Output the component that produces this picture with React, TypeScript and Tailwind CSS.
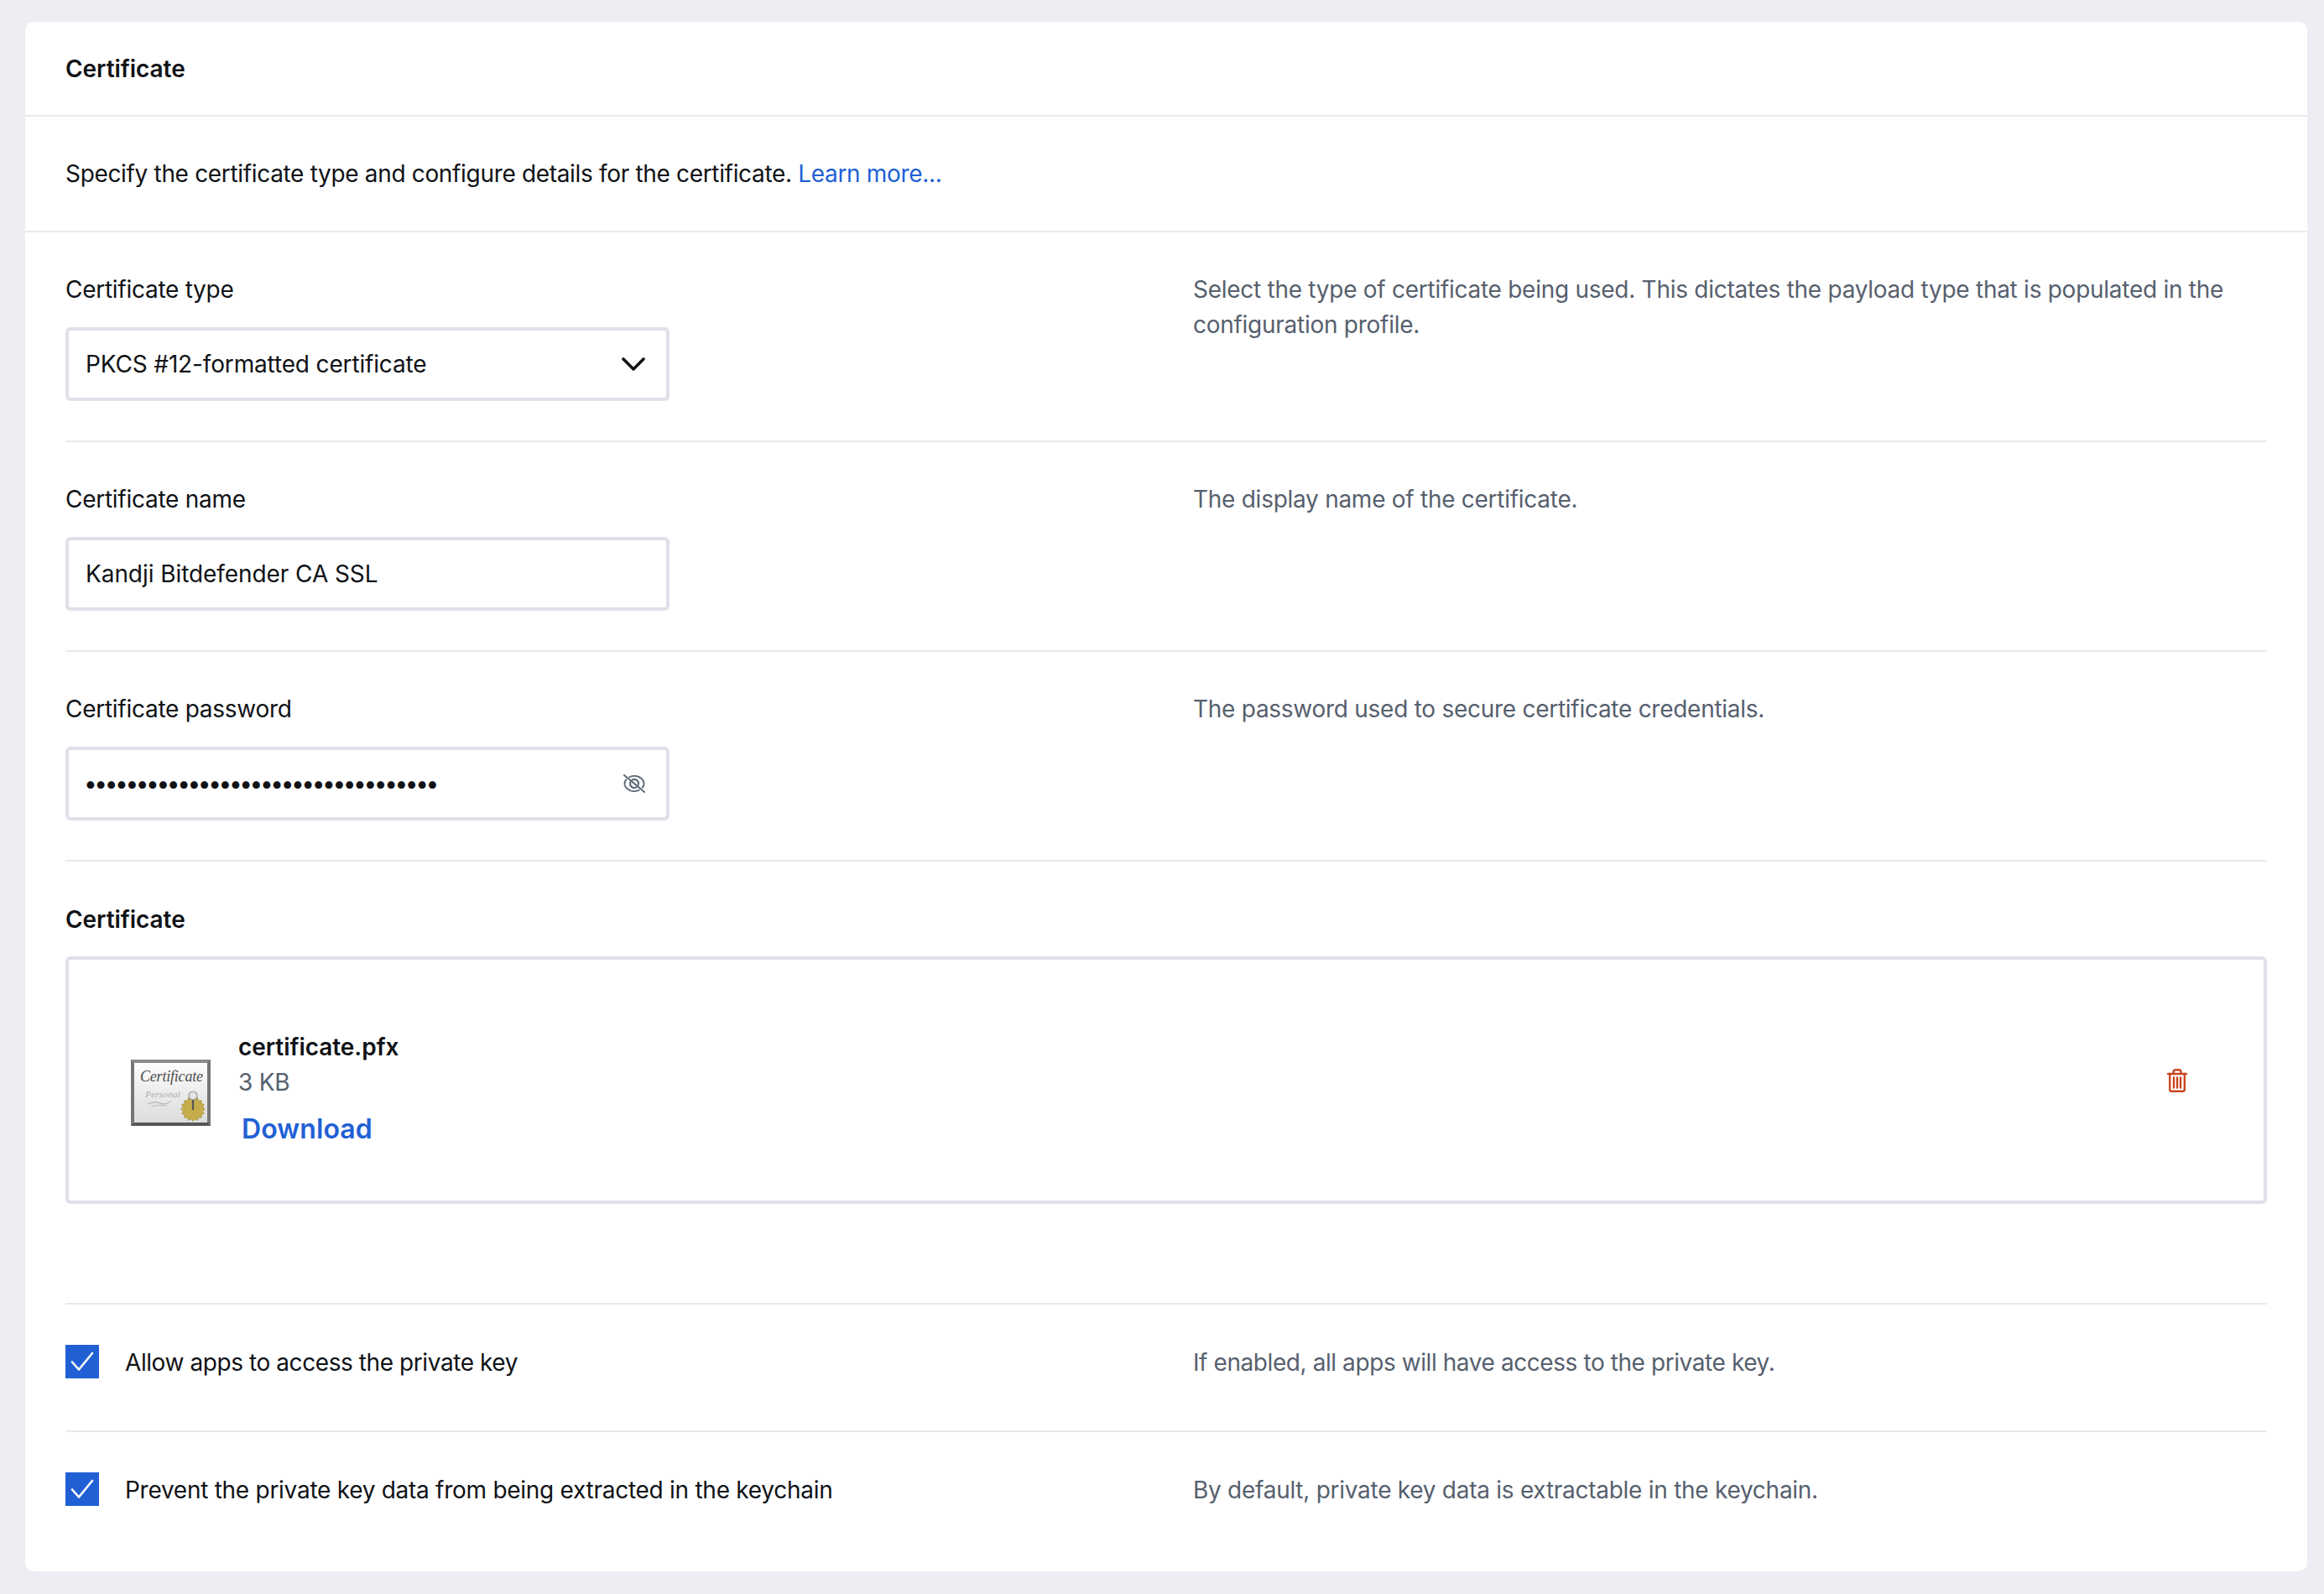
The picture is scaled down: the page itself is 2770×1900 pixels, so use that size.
import type { ReactNode } from 'react';

const hint = 'text-[#56606e]';

// seal around the key on the certificate thumbnail
const sealPoints = Array.from({ length: 32 }, (_, i) => {
  const r = i % 2 === 0 ? 14.5 : 12;
  const a = (i / 32) * Math.PI * 2;
  return `${(70 + r * Math.cos(a)).toFixed(1)},${(55 + r * Math.sin(a)).toFixed(1)}`;
}).join(' ');

function Hint({ children, className = '' }: { children: ReactNode; className?: string }) {
  return <p className={`${hint} w-[1240px] ${className}`}>{children}</p>;
}

function Field({ label, help, children }: { label: string; help: ReactNode; children: ReactNode }) {
  return (
    <section className="mx-[48px] border-b-2 border-[#e8e9ee] pt-[47px] pb-[47px] flex h-[250px] box-border">
      <div className="w-[1344px] shrink-0">
        <label className="block mb-[24px]">{label}</label>
        {children}
      </div>
      <Hint>{help}</Hint>
    </section>
  );
}

function Check({ label, help, last, labelClass = '', helpClass = '' }: { label: string; help: string; last?: boolean; labelClass?: string; helpClass?: string }) {
  return (
    <section className={`mx-[48px] flex pt-[48px] ${last ? 'h-[166px]' : 'h-[152px] border-b-2 border-[#e8e9ee]'}`}>
      <div className="w-[1344px] shrink-0 h-[40px] flex items-center gap-[31px]">
        <span className="w-[40px] h-[40px] bg-[#2160d4] flex items-center justify-center">
          <svg width="28" height="24" viewBox="0 0 28 24" fill="none" stroke="#fff" strokeWidth="2.6" strokeLinecap="round" strokeLinejoin="round">
            <path d="M2 12.5 10 21.5 26 2" />
          </svg>
        </span>
        <span className={`pt-[2px] ${labelClass}`}>{label}</span>
      </div>
      <div className="h-[40px] flex items-center">
        <Hint className={`pt-[2px] ${helpClass}`}>{help}</Hint>
      </div>
    </section>
  );
}

function CertThumb() {
  return (
    <div className="w-[95px] h-[79px] mt-[30px] shrink-0 relative overflow-hidden border-[4px] border-t-[#8a8a8a] border-x-[#767676] border-b-[#565656] bg-gradient-to-b from-[#fdfdfd] to-[#dcdcdc] font-['Liberation_Serif',serif] italic tracking-normal">
      <span className="absolute left-[7px] top-[6px] text-[18px] leading-[20px] text-[#4c4c4c] tracking-[-0.2px]">Certificate</span>
      <span className="absolute left-[13px] top-[30px] text-[11px] leading-[14px] text-[#aaa] tracking-[0.3px]">Personal</span>
      <svg className="absolute left-0 top-0" width="87" height="71" viewBox="0 0 87 71" fill="none">
        <path d="M16 49q8-4 15-1t13-3" stroke="#aaa" strokeWidth="1" />
        <path d="M20 52q9-3 19-1" stroke="#bbb" strokeWidth="1" />
        <polygon points={sealPoints} fill="#c4ad4a" stroke="#a18c33" strokeWidth="0.6" />
        <circle cx="70" cy="39" r="5" fill="#e4e4e4" stroke="#999" strokeWidth="1.2" />
        <path d="M70 44v12" stroke="#555" strokeWidth="2.2" />
      </svg>
    </div>
  );
}

export default function App() {
  return (
    <div className="min-h-[1900px] bg-[#eceef3] pr-[20px] pt-[26px] pl-[30px] font-['Inter',sans-serif] text-[28px] leading-[42px] text-[#101216] tracking-[-0.27px]">
      <main className="bg-white rounded-[10px] h-[1847px]">
        <header className="h-[113px] border-b-2 border-[#e8e9ee] pl-[48px] flex items-center font-semibold tracking-[-0.05px]">Certificate</header>
        <div className="h-[138px] box-border border-b-2 border-[#e8e9ee] pl-[48px] flex items-center">
          <p className="tracking-[-0.33px]">
            Specify the certificate type and configure details for the certificate.{' '}
            <a className="text-[#2160d4]" href="#learn">Learn more...</a>
          </p>
        </div>

        <Field label="Certificate type" help="Select the type of certificate being used. This dictates the payload type that is populated in the configuration profile.">
          <div className="w-[720px] h-[88px] border-[4px] border-[#dfe1e9] rounded-[6px] flex items-center justify-between pl-[20px] pr-[25px]">
            <span className="tracking-[-0.15px]">PKCS #12-formatted certificate</span>
            <svg width="28" height="16" viewBox="0 0 28 16" fill="none" stroke="#101216" strokeWidth="3.6" strokeLinecap="round" strokeLinejoin="round">
              <path d="M2 2l12 12L26 2" />
            </svg>
          </div>
        </Field>

        <Field label="Certificate name" help="The display name of the certificate.">
          <div className="w-[720px] h-[88px] border-[4px] border-[#dfe1e9] rounded-[6px] flex items-center pl-[20px]">
            <span className="tracking-[-0.07px]">Kandji Bitdefender CA SSL</span>
          </div>
        </Field>

        <Field label="Certificate password" help="The password used to secure certificate credentials.">
          <div className="w-[720px] h-[88px] border-[4px] border-[#dfe1e9] rounded-[6px] flex items-center justify-between pl-[18px] pr-[25px]">
            <span className="text-[28px] tracking-[-3.4px] leading-none">••••••••••••••••••••••••••••••••••</span>
            <svg width="26" height="22" viewBox="0 0 26 22" fill="none" stroke="#5f6b7a" strokeWidth="2.1" strokeLinecap="round">
              <path d="M1 1l24 20" />
              <path d="M7.500 3.100A11.500 9 0 0 1 22.800 15.700" />
              <path d="M18.500 18.900A11.500 9 0 0 1 3.200 6.300" />
              <path d="M10.500 6.670A5 5 0 0 1 17.700 12.700" />
              <path d="M15.500 15.330A5 5 0 0 1 8.300 9.290" />
            </svg>
          </div>
        </Field>

        <section className="mx-[48px] border-b-2 border-[#e8e9ee] h-[528px] box-border pt-[48px]">
          <h2 className="font-semibold mb-[23px] tracking-[-0.05px]">Certificate</h2>
          <div className="h-[295px] border-[4px] border-[#dfe1e9] rounded-[6px] flex items-center justify-between pl-[74px] pr-[91px]">
            <div className="flex items-center gap-[33px]">
              <CertThumb />
              <div className="pt-[18px]">
                <div className="font-semibold tracking-[-0.05px]">certificate.pfx</div>
                <div className={hint}>3 KB</div>
                <a className="block mt-[14px] ml-[4px] text-[32px] font-semibold text-[#2160d4] tracking-[0.1px]" href="#download">Download</a>
              </div>
            </div>
            <svg width="24" height="28" viewBox="0 0 24 28" fill="none" stroke="#c8461f" strokeWidth="2.4" strokeLinecap="round" strokeLinejoin="round">
              <path d="M1 6h22" />
              <path d="M7.500 6V3.500C7.500 2 8.500 1.200 10 1.200h4c1.500 0 2.500.8 2.500 2.300V6" />
              <path d="M3.200 6v18.500c0 1.400.9 2.300 2.300 2.300h13c1.400 0 2.300-.9 2.300-2.300V6" />
              <path d="M8 10.500v12M12 10.500v12M16 10.500v12" />
            </svg>
          </div>
        </section>

        <Check labelClass="tracking-[-0.42px]" helpClass="tracking-[-0.42px]" label="Allow apps to access the private key" help="If enabled, all apps will have access to the private key." />
        <Check last label="Prevent the private key data from being extracted in the keychain" help="By default, private key data is extractable in the keychain." />
      </main>
    </div>
  );
}
